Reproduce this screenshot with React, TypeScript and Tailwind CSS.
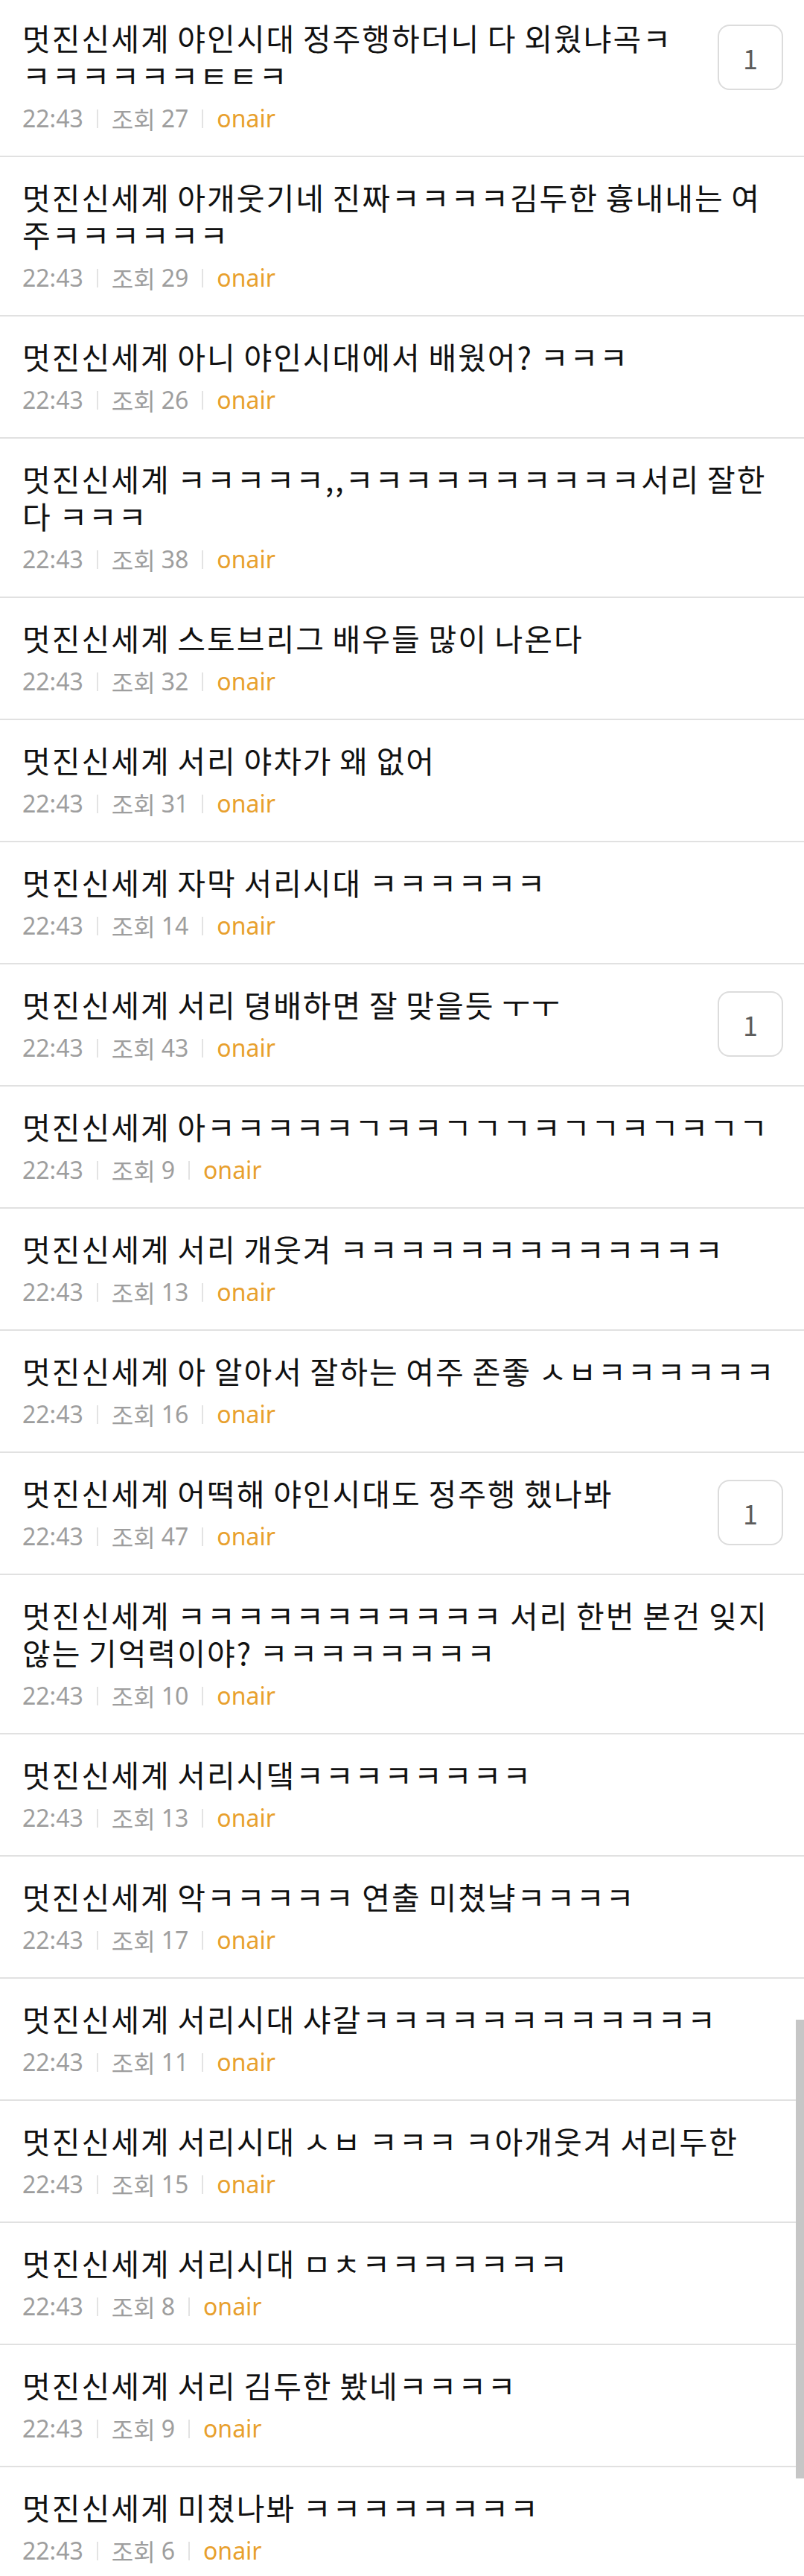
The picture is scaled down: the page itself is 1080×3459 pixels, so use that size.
type Post = { title: string; views: number; replies?: number };

const posts: Post[] = [
  { title: "멋진신세계 야인시대 정주행하더니 다 외웠냐곡ㅋㅋㅋㅋㅋㅋㅋㅌㅌㅋ", views: 27, replies: 1 },
  { title: "멋진신세계 아개웃기네 진짜ㅋㅋㅋㅋ김두한 흉내내는 여주ㅋㅋㅋㅋㅋㅋ", views: 29 },
  { title: "멋진신세계 아니 야인시대에서 배웠어? ㅋㅋㅋ", views: 26 },
  { title: "멋진신세계 ㅋㅋㅋㅋㅋ,,ㅋㅋㅋㅋㅋㅋㅋㅋㅋㅋ서리 잘한다 ㅋㅋㅋ", views: 38 },
  { title: "멋진신세계 스토브리그 배우들 많이 나온다", views: 32 },
  { title: "멋진신세계 서리 야차가 왜 없어", views: 31 },
  { title: "멋진신세계 자막 서리시대 ㅋㅋㅋㅋㅋㅋ", views: 14 },
  { title: "멋진신세계 서리 뎡배하면 잘 맞을듯 ㅜㅜ", views: 43, replies: 1 },
  { title: "멋진신세계 아ㅋㅋㅋㅋㅋㄱㅋㅋㄱㄱㄱㅋㄱㄱㅋㄱㅋㄱㄱ", views: 9 },
  { title: "멋진신세계 서리 개웃겨 ㅋㅋㅋㅋㅋㅋㅋㅋㅋㅋㅋㅋㅋ", views: 13 },
  { title: "멋진신세계 아 알아서 잘하는 여주 존좋 ㅅㅂㅋㅋㅋㅋㅋㅋ", views: 16 },
  { title: "멋진신세계 어떡해 야인시대도 정주행 했나봐", views: 47, replies: 1 },
  { title: "멋진신세계 ㅋㅋㅋㅋㅋㅋㅋㅋㅋㅋㅋ 서리 한번 본건 잊지 않는 기억력이야? ㅋㅋㅋㅋㅋㅋㅋㅋ", views: 10 },
  { title: "멋진신세계 서리시댘ㅋㅋㅋㅋㅋㅋㅋㅋ", views: 13 },
  { title: "멋진신세계 악ㅋㅋㅋㅋㅋ 연출 미쳤냨ㅋㅋㅋㅋ", views: 17 },
  { title: "멋진신세계 서리시대 샤갈ㅋㅋㅋㅋㅋㅋㅋㅋㅋㅋㅋㅋ", views: 11 },
  { title: "멋진신세계 서리시대 ㅅㅂ ㅋㅋㅋ ㅋ아개웃겨 서리두한", views: 15 },
  { title: "멋진신세계 서리시대 ㅁㅊㅋㅋㅋㅋㅋㅋㅋ", views: 8 },
  { title: "멋진신세계 서리 김두한 봤네ㅋㅋㅋㅋ", views: 9 },
  { title: "멋진신세계 미쳤나봐 ㅋㅋㅋㅋㅋㅋㅋㅋ", views: 6 },
];

export default function App() {
  return (
    <div className="relative h-[3459px] overflow-hidden bg-white">
      <ul>
        {posts.map((p, i) => (
          <PostRow key={i} post={p} first={i === 0} />
        ))}
      </ul>
      {/* overlay scrollbar */}
      <div className="absolute right-0 top-[2712px] h-[616px] w-[11px] bg-[#c6c6c6]" />
    </div>
  );
}

function PostRow({ post, first }: { post: Post; first: boolean }) {
  return (
    <li
      className={
        "flex items-start border-b-2 border-[#e1e1e1] pb-[28px] pl-[30px] pr-[28px] " +
        (first ? "pt-[25px]" : "pt-[28px]")
      }
    >
      <div className="min-w-0 flex-1">
        <p className="text-[41px] leading-[50px] tracking-[2px] text-[#111111] [word-spacing:-1.5px] [font-family:'Noto_Sans_CJK_KR',sans-serif]">
          {post.title}
        </p>
        <div className="mt-[12px] flex h-[44px] items-center text-[32px] leading-[44px] text-[#9e9e9e] [font-family:'Noto_Sans','Noto_Sans_CJK_KR',sans-serif]">
          <span>22:43</span>
          <Bar />
          <span className="[font-family:'Noto_Sans_CJK_KR',sans-serif]">조회</span>
          <span className="ml-[8px]">{post.views}</span>
          <Bar />
          <span className="text-[#e8a02d]">onair</span>
        </div>
      </div>
      {post.replies && (
        <div className="ml-[34px] mt-[8px] flex h-[88px] w-[88px] shrink-0 items-center justify-center rounded-[16px] border-2 border-[#dcdcdc] text-[36px] text-[#5c5c5c] [font-family:'Noto_Sans_CJK_KR',sans-serif]">
          {post.replies}
        </div>
      )}
    </li>
  );
}

function Bar() {
  return <span className="mx-[18px] h-[25px] w-[2px] bg-[#e3e3e3]" />;
}
